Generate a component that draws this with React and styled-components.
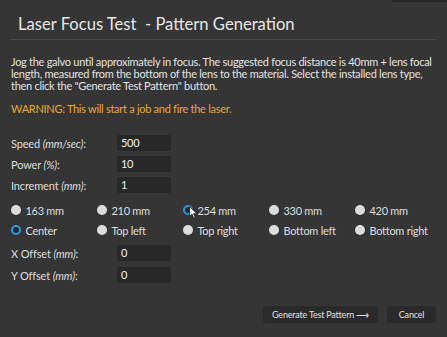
import React from "react";
import styled, { createGlobalStyle } from "styled-components";

const Global = createGlobalStyle`
  html, body { margin: 0; padding: 0; background: #353535; }
  body { font-family: Lato, "Open Sans", sans-serif; }
`;

const Dialog = styled.div`
  width: 447px;
  height: 337px;
  background: #353535;
  color: #dcdcdc;
  box-sizing: border-box;
  position: relative;
  overflow: hidden;
`;

const TopStrip = styled.div`
  position: absolute;
  top: 0;
  right: 0;
  width: 55px;
  height: 2px;
  background: #252525;
`;

const Header = styled.div`
  margin: 0 10px;
  padding: 14px 0 5px 8px;
  border-bottom: 1px solid #474747;
  font-size: 16.6px;
  color: #e6e6e6;
  line-height: 20px;
  white-space: pre;
`;

const Body = styled.div`
  padding: 16px 11px 0 11px;
  font-size: 11px;
  letter-spacing: -0.28px;
`;

const Para = styled.p`
  margin: 0;
  line-height: 12px;
  color: #e2e2e2;
  white-space: nowrap;
`;

const Warning = styled.p`
  margin: 10px 0 0 0;
  line-height: 14px;
  color: #e5a93a;
`;

const Fields = styled.div`
  margin-top: 19px;
  display: flex;
  flex-direction: column;
  gap: 5px;
`;

const Row = styled.div`
  display: flex;
  align-items: center;
  height: 16px;
`;

const Label = styled.div`
  width: 106px;
  color: #dedede;
  letter-spacing: -0.15px;
  i { font-style: italic; }
`;

const Input = styled.div`
  width: 54px;
  height: 16px;
  background: #282828;
  border-radius: 2px;
  box-sizing: border-box;
  padding-left: 4px;
  line-height: 16px;
  color: #f0f0f0;
`;

const RadioGrid = styled.div`
  margin-top: 10px;
  display: grid;
  grid-template-columns: repeat(5, 86px);
  row-gap: 6px;
`;

const RadioItem = styled.div`
  display: flex;
  align-items: center;
  height: 14px;
  position: relative;
  color: #dedede;
`;

const Dot = styled.span`
  width: 10px;
  height: 10px;
  border-radius: 50%;
  box-sizing: border-box;
  margin: 0 5px 0 -0.5px;
  background: ${(p) => (p.$on ? "#1f2a33" : "#dcdcdc")};
  border: ${(p) => (p.$on ? "2px solid #2f97dd" : "none")};
  flex: none;
`;

const Cursor = styled.svg`
  position: absolute;
  left: 6px;
  top: 3px;
`;

const Offsets = styled.div`
  margin-top: 8px;
  display: flex;
  flex-direction: column;
  gap: 6px;
`;

const Footer = styled.div`
  display: flex;
  justify-content: flex-end;
  gap: 9px;
  padding: 23px 11px 0 0;
`;

const Button = styled.div`
  height: 17px;
  width: ${(p) => p.$w}px;
  text-align: center;
  background: #2a2a2a;
  border-radius: 2px;
  font-size: 9px;
  letter-spacing: -0.2px;
  line-height: 17px;
  color: #e0e0e0;
`;

const lenses = ["163 mm", "210 mm", "254 mm", "330 mm", "420 mm"];
const positions = ["Center", "Top left", "Top right", "Bottom left", "Bottom right"];

export default function App() {
  return (
    <>
      <Global />
      <Dialog>
        <TopStrip />
        <Header>{"Laser Focus Test  - Pattern Generation"}</Header>
        <Body>
          <Para>
            Jog the galvo until approximately in focus. The suggested focus distance is 40mm + lens focal
            <br />
            length, measured from the bottom of the lens to the material. Select the installed lens type,
            <br />
            then click the "Generate Test Pattern" button.
          </Para>
          <Warning>WARNING: This will start a job and fire the laser.</Warning>
          <Fields>
            <Row><Label>Speed <i>(mm/sec)</i>:</Label><Input>500</Input></Row>
            <Row><Label>Power <i>(%)</i>:</Label><Input>10</Input></Row>
            <Row><Label>Increment <i>(mm)</i>:</Label><Input>1</Input></Row>
          </Fields>
          <RadioGrid>
            {lenses.map((l, i) => (
              <RadioItem key={l}>
                <Dot $on={i === 2} />
                {l}
                {i === 2 && (
                  <Cursor width="9" height="13" viewBox="0 0 9 13">
                    <path d="M0.5 0.5 L0.5 10.5 L3 8.2 L4.8 12.3 L6.3 11.6 L4.6 7.7 L8 7.7 Z" fill="#fff" stroke="#111" strokeWidth="0.8" />
                  </Cursor>
                )}
              </RadioItem>
            ))}
            {positions.map((l, i) => (
              <RadioItem key={l}>
                <Dot $on={i === 0} />
                {l}
              </RadioItem>
            ))}
          </RadioGrid>
          <Offsets>
            <Row><Label>X Offset <i>(mm)</i>:</Label><Input>0</Input></Row>
            <Row><Label>Y Offset <i>(mm)</i>:</Label><Input>0</Input></Row>
          </Offsets>
        </Body>
        <Footer>
          <Button $w={115}>Generate Test Pattern ⟶</Button>
          <Button $w={49}>Cancel</Button>
        </Footer>
      </Dialog>
    </>
  );
}
